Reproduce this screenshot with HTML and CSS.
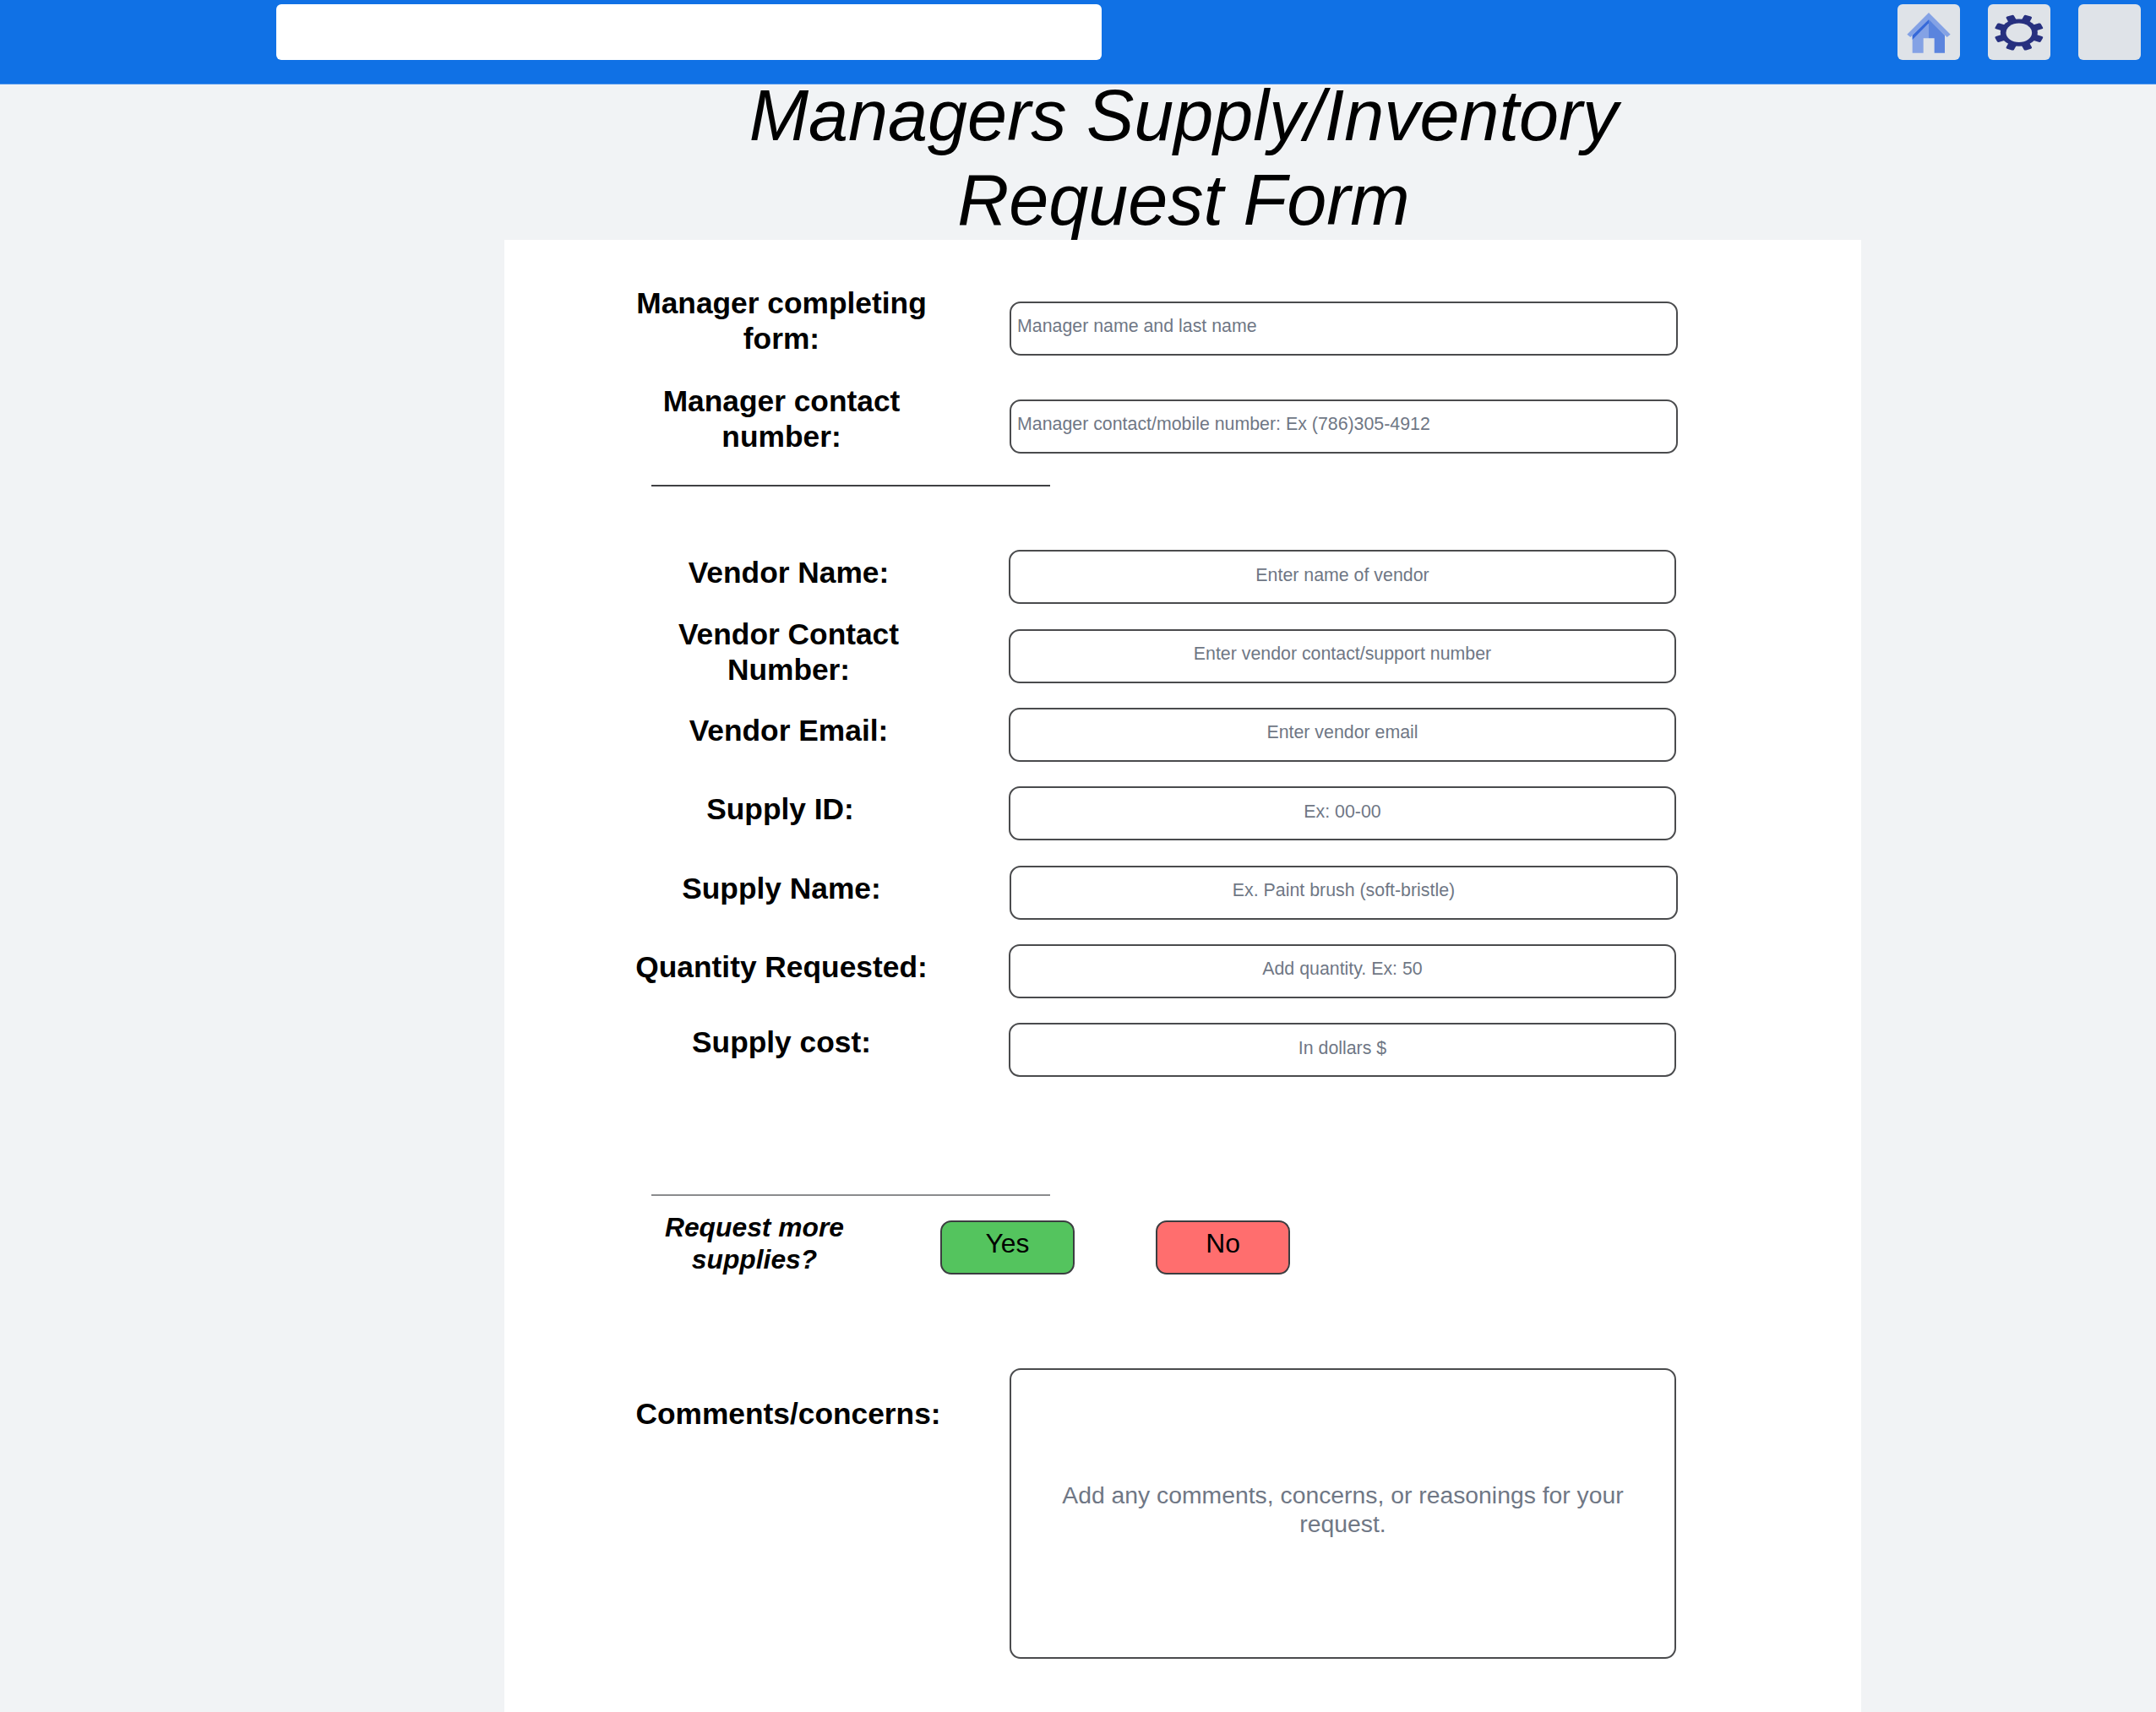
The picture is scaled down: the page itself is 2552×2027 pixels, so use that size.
FILE: index.html
```html
<!DOCTYPE html>
<html lang="en">
<head>
<meta charset="utf-8">
<title>Managers Supply/Inventory Request Form</title>
<link rel="stylesheet" href="styles.css">
</head>
<body>
<header class="topbar">
  <div class="search"></div>
  <nav class="actions">
    <a class="tile"><svg viewBox="0 0 222 198">
      <path fill="#84a2e5" d="M53 112 111 52V121H92V173H53Z"/>
      <path fill="#5a84de" d="M111 52 168 110V173H131V121H111Z"/>
      <path fill="#3568d9" d="M111 54 53 110V126L111 67Z"/>
      <path fill="#84a2e5" d="M111 30 188 107 176 117 111 54 46 117 34 107Z"/>
    </svg></a>
    <a class="tile"><svg viewBox="0 0 222 198">
      <g transform="translate(110.5 101) scale(1 .735)" fill="#27307f">
        <g transform="rotate(22.5)">
          <rect x="-88" y="-15" width="176" height="30" rx="6"/>
          <rect x="-88" y="-15" width="176" height="30" rx="6" transform="rotate(45)"/>
          <rect x="-88" y="-15" width="176" height="30" rx="6" transform="rotate(90)"/>
          <rect x="-88" y="-15" width="176" height="30" rx="6" transform="rotate(135)"/>
        </g>
        <circle r="66"/>
        <circle r="46" fill="#dfe3e8"/>
      </g>
    </svg></a>
    <a class="tile"></a>
  </nav>
</header>
<h1 class="title">Managers Supply/Inventory<br>Request Form</h1>
<main class="panel">
  <section class="group manager">
    <div class="row"><label class="label high">Manager completing<br>form:</label><div class="field start wide">Manager name and last name</div></div>
    <div class="row"><label class="label high">Manager contact<br>number:</label><div class="field start wide">Manager contact/mobile number: Ex (786)305-4912</div></div>
  </section>
  <hr class="rule">
  <section class="group vendor">
    <div class="row"><label class="label right">Vendor Name:</label><div class="field">Enter name of vendor</div></div>
    <div class="row"><label class="label right">Vendor Contact<br>Number:</label><div class="field">Enter vendor contact/support number</div></div>
    <div class="row"><label class="label right">Vendor Email:</label><div class="field">Enter vendor email</div></div>
    <div class="row"><label class="label left">Supply ID:</label><div class="field">Ex: 00-00</div></div>
    <div class="row"><label class="label">Supply Name:</label><div class="field wide">Ex. Paint brush (soft-bristle)</div></div>
    <div class="row"><label class="label">Quantity Requested:</label><div class="field">Add quantity. Ex: 50</div></div>
    <div class="row"><label class="label high">Supply cost:</label><div class="field">In dollars $</div></div>
  </section>
  <hr class="rule thin">
  <section class="more">
    <p class="question">Request more<br>supplies?</p>
    <div class="choice yes">Yes</div>
    <div class="choice no">No</div>
  </section>
  <section class="comments">
    <label class="label right">Comments/concerns:</label>
    <div class="field area">Add any comments, concerns, or reasonings for your<br>request.</div>
  </section>
</main>
</body>
</html>
```
FILE: styles.css
```css
* { box-sizing: border-box; }

html, body { height: 100%; }

body {
  margin: 0;
  display: flex;
  flex-direction: column;
  background: #f1f3f5;
  font-family: "Liberation Sans", Arial, sans-serif;
  color: #000;
  overflow: hidden;
}

.topbar {
  flex: none;
  display: flex;
  justify-content: space-between;
  align-items: flex-start;
  height: 100px;
  padding: 5px 18px 0 327px;
  background: #1071e5;
  border-bottom: 1px solid #4c94ec;
}

.search {
  width: 977px;
  height: 66px;
  background: #fff;
  border-radius: 6px;
}

.actions { display: flex; gap: 33px; }

.tile {
  width: 74px;
  height: 66px;
  background: #dfe3e8;
  border-radius: 6px;
}

.tile svg { display: block; width: 74px; height: 66px; }

.title {
  flex: none;
  width: 1606px;
  height: 197px;
  margin: -13px 0 0 598px;
  font-size: 84.5px;
  font-weight: 400;
  font-style: italic;
  line-height: 100.2px;
  text-align: center;
}

.panel {
  flex: 1;
  width: 1606px;
  margin-left: 597px;
  padding: 54px 0 0 1px;
  background: #fff;
  display: flex;
  flex-direction: column;
}

.group { display: flex; flex-direction: column; }

.manager { gap: 23px; }

.row {
  display: grid;
  grid-template-columns: 537px 791px;
  column-gap: 59px;
  align-items: center;
  height: 93.33px;
}

.label {
  padding: 0 0 10px 117px;
  font-size: 35.35px;
  font-weight: 700;
  line-height: 42px;
  text-align: center;
  white-space: nowrap;
}

.label.high { padding-bottom: 18px; }
.label.right { padding-left: 134px; }
.label.left { padding-left: 114px; }

.field {
  display: flex;
  align-items: center;
  justify-content: center;
  width: 790px;
  height: 64px;
  padding-bottom: 4px;
  border: 2px solid #4a4b4d;
  border-radius: 13px;
  font-size: 21.35px;
  line-height: 25.5px;
  color: #6f7785;
  text-align: center;
}

.field.wide { width: 791px; margin-left: 1px; }

.field.start { justify-content: flex-start; padding: 0 0 5px 7px; }

.rule {
  flex: none;
  width: 472px;
  height: 2px;
  margin: 26px 0 61px 173px;
  border: 0;
  background: #3f4043;
}

.rule.thin { margin: 124px 0 29px 173px; background: #8a8b8d; }

.more { display: flex; align-items: flex-start; height: 64px; }

.question {
  width: 214px;
  margin: -10px 113px 0 188px;
  font-size: 31.8px;
  font-weight: 700;
  font-style: italic;
  line-height: 37.8px;
  text-align: center;
  white-space: nowrap;
}

.choice {
  display: flex;
  align-items: center;
  justify-content: center;
  width: 159px;
  height: 64px;
  margin-right: 96px;
  padding-bottom: 8px;
  border: 2px solid #3b3d40;
  border-radius: 13px;
  font-size: 31.8px;
}

.yes { background: #54c45e; }
.no { background: #ff6e6e; }

.comments {
  display: grid;
  grid-template-columns: 537px 791px;
  column-gap: 59px;
  align-items: start;
  margin-top: 111px;
}

.comments .label { padding: 33px 0 0 133px; }

.field.area {
  width: 789px;
  height: 344px;
  margin-left: 1px;
  padding-bottom: 9px;
  font-size: 28.33px;
  line-height: 34px;
}
```
